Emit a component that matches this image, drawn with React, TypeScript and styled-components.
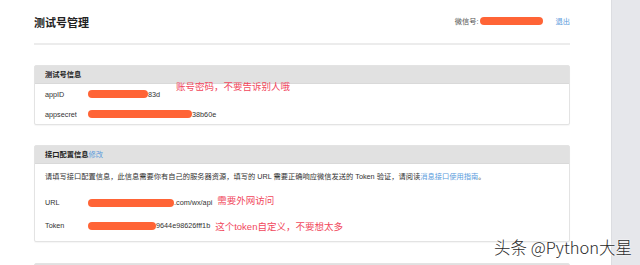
import * as React from 'react'
import styled, { createGlobalStyle } from 'styled-components'

const colors = {
  text: '#333333',
  muted: '#555555',
  link: '#5a9bdc',
  mask: '#ff6436',
  note: '#f1475c',
  panelHead: '#e1e1e1',
  line: '#ececec',
  side: '#e6e7eb',
}

const fonts = {
  sans: '"Liberation Sans", Arial, "Noto Sans CJK SC", sans-serif',
}

const GlobalStyle = createGlobalStyle`
  html, body {
    margin: 0;
    padding: 0;
    background: #ffffff;
    font-family: ${fonts.sans};
    color: ${colors.text};
  }
`

const Screen = styled.div`
  display: flex;
  width: 640px;
  height: 265px;
  overflow: hidden;
  position: relative;
`

const Main = styled.main`
  width: 536px;
  padding: 0 41px 0 34px;
  background: #fff;
`

const SideBar = styled.aside`
  flex: 1;
  background: ${colors.side};
  border-left: 1px solid #dcdde1;
`

const TopBar = styled.header`
  display: flex;
  align-items: center;
  justify-content: space-between;
  height: 43px;
  border-bottom: 2px solid ${colors.line};
`

const Title = styled.h1`
  margin: 0;
  font-size: 11px;
  font-weight: bold;
  color: #222;
`

const Account = styled.div`
  display: flex;
  align-items: center;
  font-size: 7.25px;
  color: ${colors.muted};
  padding-bottom: 1px;
`

const Logout = styled.a`
  margin-left: 12px;
  color: ${colors.link};
  text-decoration: none;
`

const Mask = styled.span<{ $w: number }>`
  display: inline-block;
  width: ${p => p.$w}px;
  height: 8px;
  border-radius: 4px;
  background: ${colors.mask};
  vertical-align: middle;
`

const Panel = styled.section<{ $gap?: number }>`
  margin-top: ${p => p.$gap ?? 20}px;
  border: 1px solid #e3e3e3;
  border-radius: 2px;
  box-shadow: 0 1px 1px rgba(0, 0, 0, 0.04);
  background: #fff;
`

const PanelHead = styled.div`
  height: 17px;
  line-height: 17px;
  padding-left: 10px;
  background: ${colors.panelHead};
  border-bottom: 1px solid #d9d9d9;
  font-size: 7.25px;
  font-weight: bold;
  color: #222;
`

const HeadLink = styled.a`
  font-weight: normal;
  color: ${colors.link};
  text-decoration: none;
`

const PanelBody = styled.div<{ $pad?: boolean }>`
  padding: ${p => (p.$pad ? '6px 10px 4px' : '0 10px')};
`

const Row = styled.div<{ $divided?: boolean }>`
  position: relative;
  display: flex;
  align-items: center;
  height: ${p => (p.$divided ? '20px' : '23px')};
  font-size: 7.25px;
  color: ${colors.text};
  & + & {
    border-top: ${p => (p.$divided ? `1px solid ${colors.line}` : 'none')};
  }
`

const Label = styled.span`
  width: 43px;
  flex-shrink: 0;
  color: ${colors.text};
`

const Value = styled.span`
  display: flex;
  align-items: center;
  white-space: nowrap;
  color: ${colors.text};
`

const Note = styled.span<{ $lift?: number; $gap?: number }>`
  position: relative;
  top: ${p => -(p.$lift || 0)}px;
  margin-left: ${p => p.$gap ?? 6}px;
  font-size: 9.5px;
  color: ${colors.note};
  white-space: nowrap;
`

const Intro = styled.p`
  margin: 0 0 7px;
  height: 14px;
  line-height: 14px;
  font-size: 7.25px;
  color: ${colors.text};
  white-space: nowrap;
`

const Watermark = styled.div`
  position: absolute;
  right: 8px;
  bottom: 6px;
  font-family: "Noto Sans CJK SC", "Noto Sans", sans-serif;
  font-size: 16.5px;
  font-weight: 300;
  color: #2a2a2a;
  text-shadow: 0 0 2px #fff, 0 0 2px #fff;
`

export default function App() {
  return (
    <>
      <GlobalStyle />
      <Screen>
        <Main>
          <TopBar>
            <Title>测试号管理</Title>
            <Account>
              微信号:&nbsp;
              <Mask $w={63} />
              <Logout href="#">退出</Logout>
            </Account>
          </TopBar>

          <Panel>
            <PanelHead>测试号信息</PanelHead>
            <PanelBody>
              <Row $divided>
                <Label>appID</Label>
                <Value>
                  <Mask $w={60} />83d
                </Value>
                <Note $lift={8} $gap={16}>账号密码，不要告诉别人哦</Note>
              </Row>
              <Row $divided>
                <Label>appsecret</Label>
                <Value>
                  <Mask $w={104} />38b60e
                </Value>
              </Row>
            </PanelBody>
          </Panel>

          <Panel>
            <PanelHead>
              接口配置信息<HeadLink href="#">修改</HeadLink>
            </PanelHead>
            <PanelBody $pad>
              <Intro>
                请填写接口配置信息，此信息需要你有自己的服务器资源，填写的 URL 需要正确响应微信发送的 Token 验证，请阅读
                <HeadLink href="#">消息接口使用指南</HeadLink>。
              </Intro>
              <Row>
                <Label>URL</Label>
                <Value>
                  <Mask $w={86} />.com/wx/api
                </Value>
                <Note $lift={3} $gap={5}>需要外网访问</Note>
              </Row>
              <Row>
                <Label>Token</Label>
                <Value>
                  <Mask $w={68} />9644e98626fff1b
                </Value>
                <Note $gap={5}>这个token自定义，不要想太多</Note>
              </Row>
            </PanelBody>
          </Panel>

          <Panel $gap={21}>
            <PanelHead />
          </Panel>
        </Main>
        <SideBar />
        <Watermark>头条 @Python大星</Watermark>
      </Screen>
    </>
  )
}
